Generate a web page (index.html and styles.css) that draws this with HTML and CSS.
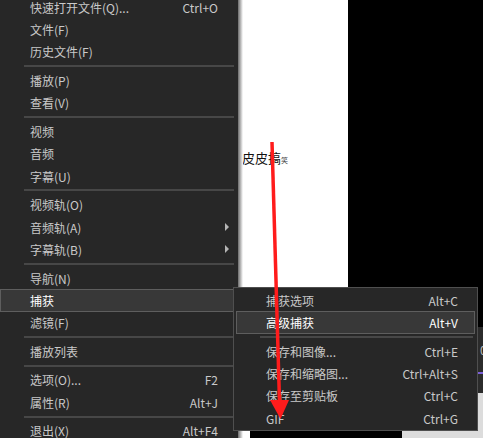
FILE: index.html
```html
<!DOCTYPE html>
<html lang="zh-CN">

<head>
    <meta charset="UTF-8">
    <meta name="viewport" content="width=device-width, initial-scale=1.0">
    <title>捕获菜单</title>

    <link rel="stylesheet" href="styles.css">
</head>

<body>
    <div class="screen">
        <div class="doc">
            <p class="doc-text">皮皮搞<small>笑</small></p>
        </div>
        <div class="doc-bottom"></div>
        <div class="panel-dark">
            <span class="panel-text">0;</span>
            <div class="panel-line"></div>
        </div>
        <div class="panel-light"></div>

        <div class="menu main-menu">
            <div class="menu-item"><span>快速打开文件(Q)...</span><span>Ctrl+O</span><i></i></div>
            <div class="menu-item"><span>文件(F)</span><span></span><i></i></div>
            <div class="menu-item"><span>历史文件(F)</span><span></span><i></i></div>
            <div class="menu-sep"></div>
            <div class="menu-item"><span>播放(P)</span><span></span><i></i></div>
            <div class="menu-item"><span>查看(V)</span><span></span><i></i></div>
            <div class="menu-sep"></div>
            <div class="menu-item"><span>视频</span><span></span><i></i></div>
            <div class="menu-item"><span>音频</span><span></span><i></i></div>
            <div class="menu-item"><span>字幕(U)</span><span></span><i></i></div>
            <div class="menu-sep"></div>
            <div class="menu-item"><span>视频轨(O)</span><span></span><i></i></div>
            <div class="menu-item"><span>音频轨(A)</span><span></span><i class="sub-arrow"></i></div>
            <div class="menu-item"><span>字幕轨(B)</span><span></span><i class="sub-arrow"></i></div>
            <div class="menu-sep"></div>
            <div class="menu-item"><span>导航(N)</span><span></span><i></i></div>
            <div class="menu-item active"><span>捕获</span><span></span><i></i></div>
            <div class="menu-item"><span>滤镜(F)</span><span></span><i></i></div>
            <div class="menu-sep"></div>
            <div class="menu-item"><span>播放列表</span><span></span><i></i></div>
            <div class="menu-sep"></div>
            <div class="menu-item"><span>选项(O)...</span><span>F2</span><i></i></div>
            <div class="menu-item"><span>属性(R)</span><span>Alt+J</span><i></i></div>
            <div class="menu-sep"></div>
            <div class="menu-item"><span>退出(X)</span><span>Alt+F4</span><i></i></div>
        </div>

        <div class="menu sub-menu">
            <div class="menu-item"><span>捕获选项</span><span>Alt+C</span></div>
            <div class="menu-item active"><span>高级捕获</span><span>Alt+V</span></div>
            <div class="menu-sep"></div>
            <div class="menu-item"><span>保存和图像...</span><span>Ctrl+E</span></div>
            <div class="menu-item"><span>保存和缩略图...</span><span>Ctrl+Alt+S</span></div>
            <div class="menu-item"><span>保存至剪贴板</span><span>Ctrl+C</span></div>
            <div class="menu-item"><span>GIF</span><span>Ctrl+G</span></div>
        </div>

        <svg class="arrow" width="483" height="438" viewBox="0 0 483 438">
            <line x1="272" y1="142" x2="279.5" y2="402" stroke="#ff1c1c" stroke-width="3.5" />
            <polygon points="270,400 289,400 280.5,419" fill="#ff1c1c" />
        </svg>
    </div>
</body>

</html>
```

FILE: styles.css
```css
* {
    box-sizing: border-box;
}

body {
    margin: 0;
    background-color: #000;
    font-family: "Noto Sans CJK SC", "Microsoft YaHei", sans-serif;
    font-size: 12px;
}

.screen {
    position: relative;
    width: 483px;
    height: 438px;
    overflow: hidden;
    background-color: #000;
}

/* page behind the menus */
.doc {
    position: absolute;
    left: 238px;
    top: 0;
    width: 110px;
    height: 438px;
    background-color: #fff;
}

.doc-text {
    margin: 149px 0 0 4px;
    font-size: 13px;
    line-height: 17px;
    color: #111;
}

.doc-text small {
    font-size: 7px;
    color: #444;
}

.doc-bottom {
    position: absolute;
    left: 250px;
    top: 430px;
    width: 152px;
    height: 8px;
    background-color: #000;
}

.panel-dark {
    position: absolute;
    left: 400px;
    top: 327px;
    width: 83px;
    height: 66px;
    background-color: #2b2b2b;
}

.panel-text {
    display: block;
    margin: 16px 0 0 80px;
    color: #bbb;
    line-height: 14px;
}

.panel-line {
    margin-top: 15px;
    height: 2px;
    background-color: #7b5fd8;
}

.panel-light {
    position: absolute;
    left: 402px;
    top: 393px;
    width: 81px;
    height: 45px;
    background-color: #dcdcdc;
}

/* menus */
.menu {
    position: absolute;
    background-color: #272727;
    color: #c9c9c9;
}

.main-menu {
    left: 0;
    top: -4.2px;
    width: 238px;
    height: 460px;
}

.main-menu::after {
    content: "";
    position: absolute;
    top: 0;
    right: -5px;
    width: 5px;
    height: 100%;
    background: linear-gradient(to right, #6a6a6a, #fff);
}

.menu-item {
    display: grid;
    grid-template-columns: 1fr auto 12px;
    align-items: center;
    height: 22.4px;
    margin-right: 2px;
    padding: 0 5px 0 29px;
    border: 1px solid transparent;
    white-space: nowrap;
}

.menu-item.active {
    background-color: #383838;
    border-color: #5e5e5e;
    color: #fff;
}

.menu-sep {
    height: 2px;
    margin: 2px 4px 2.2px 24px;
    background-color: #474747;
}

.sub-arrow {
    justify-self: end;
    margin-right: 1px;
    width: 0;
    height: 0;
    border-left: 4px solid #b5b5b5;
    border-top: 4px solid transparent;
    border-bottom: 4px solid transparent;
}

.sub-menu {
    left: 233px;
    top: 287px;
    width: 245px;
    padding-top: 1px;
    border: 1px solid #4f4f4f;
}

.sub-menu .menu-item {
    grid-template-columns: 1fr auto;
    margin: 0 2px;
    padding: 0 16px 0 29px;
}

.sub-menu .menu-sep {
    margin-left: 26px;
}

.arrow {
    position: absolute;
    left: 0;
    top: 0;
    pointer-events: none;
}
```
